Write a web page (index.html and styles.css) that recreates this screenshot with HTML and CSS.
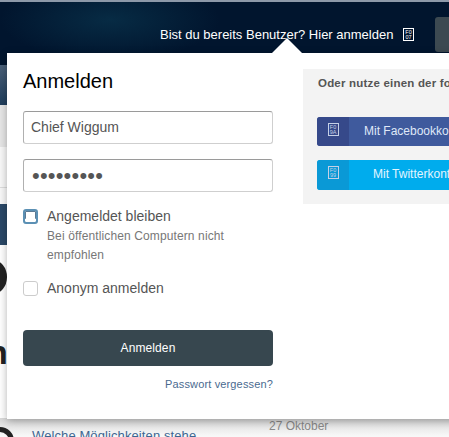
FILE: index.html
```html
<!DOCTYPE html>
<html lang="de">
<head>
  <meta charset="UTF-8">
  <title>Anmelden</title>
  <meta name="viewport" content="width=device-width, initial-scale=1.0">
  <link rel="stylesheet" href="styles.css">
</head>
<body>
  <div class="page">

    <div class="topbar">
      <span class="topbar-text">Bist du bereits Benutzer? Hier anmelden</span>
      <span class="glyph glyph-white">F0<br>07</span>
      <span class="topbar-btn"></span>
    </div>

    <div class="behind">
      <div class="strip strip-hero"></div>
      <div class="strip strip-grey"></div>
      <div class="strip strip-white"></div>
      <div class="strip strip-blue"></div>
      <div class="strip-avatar"></div>
      <div class="strip-letter">n</div>
      <div class="behind-row">
        <span class="behind-avatar"></span>
        <a class="behind-link">Welche Möglichkeiten stehe</a>
        <span class="behind-date">27 Oktober</span>
      </div>
    </div>

    <div class="popup">
      <div class="popup-caret"></div>

      <div class="login">
        <h2>Anmelden</h2>
        <div class="field">Chief Wiggum</div>
        <div class="field field-pass">•••••••••</div>

        <div class="check">
          <span class="box box-on"></span>
          <div>
            <div class="check-label">Angemeldet bleiben</div>
            <div class="check-hint">Bei öffentlichen Computern nicht empfohlen</div>
          </div>
        </div>

        <div class="check check-anon">
          <span class="box"></span>
          <div class="check-label">Anonym anmelden</div>
        </div>

        <button class="submit">Anmelden</button>
        <a class="forgot">Passwort vergessen?</a>
      </div>

      <div class="social">
        <h4>Oder nutze einen der folgenden Dienste</h4>
        <div class="social-btn fb">
          <span class="social-icon"><span class="glyph">F0<br>9A</span></span>
          <span class="social-text">Mit Facebookkonto anmelden</span>
        </div>
        <div class="social-btn tw">
          <span class="social-icon"><span class="glyph">F0<br>99</span></span>
          <span class="social-text">Mit Twitterkonto anmelden</span>
        </div>
      </div>
    </div>

  </div>
</body>
</html>
```

FILE: styles.css
```css
body {
  margin: 0;
  font-family: "Liberation Sans", Arial, sans-serif;
  background: #fff;
}

.page {
  position: relative;
  width: 449px;
  height: 437px;
  overflow: hidden;
  background: #fff;
}

.topbar {
  display: flex;
  box-sizing: border-box;
  height: 53px;
  padding-left: 160px;
  border-top: 2px solid #8d99a9;
  background:
    radial-gradient(ellipse 110px 40px at 110px 18px, rgba(14, 70, 95, .45), rgba(14, 70, 95, 0)),
    #01152e;
  color: #fff;
  font-size: 13px;
}

.topbar-text {
  flex: none;
  width: 243px;
  padding-top: 25px;
}

.glyph {
  flex: none;
  display: inline-block;
  box-sizing: border-box;
  width: 11px;
  height: 13px;
  padding-top: 1px;
  border: 1px solid #c5d0e6;
  font-size: 5.5px;
  line-height: 5px;
  text-align: center;
  color: #c5d0e6;
}

.glyph-white {
  margin-top: 26px;
  border-color: #fff;
  color: #fff;
}

.topbar-btn {
  flex: none;
  width: 60px;
  height: 35px;
  margin: 15px 0 0 21px;
  border-radius: 3px;
  background: #3c4951;
}

.behind {
  height: 384px;
  display: flex;
  flex-direction: column;
}

.strip {
  width: 10px;
}

.strip-hero {
  height: 52px;
  background: linear-gradient(to bottom, #01152e 12px, #4a6078 12px, #1f3d5c);
}

.strip-grey {
  height: 42px;
  background: #e6e6e6;
}

.strip-white {
  height: 57px;
  background: linear-gradient(to bottom, #f8f8f8 40px, #ddd 40px, #ddd 41px, #f8f8f8 41px);
}

.strip-blue {
  height: 41px;
  background: #2a4867;
}

.strip-avatar {
  width: 28px;
  height: 34px;
  margin: 15px 0 0 -21px;
  border-radius: 50%;
  background: #222;
}

.strip-letter {
  height: 40px;
  margin: 38px 0 0 -13px;
  font-size: 34px;
  font-weight: bold;
  line-height: 40px;
  color: #222;
}

.behind-row {
  position: relative;
  flex: 1;
  margin-top: 46px;
  background: linear-gradient(to bottom, #d8d8d8, #f8f8f8 18px);
}

.behind-avatar {
  position: absolute;
  left: -14px;
  top: 9px;
  box-sizing: border-box;
  width: 28px;
  height: 28px;
  border: 5px solid #222;
  border-radius: 50%;
}

.behind-link {
  position: absolute;
  left: 32px;
  top: 10px;
  font-size: 13px;
  letter-spacing: .1px;
  white-space: nowrap;
  color: #3d6691;
}

.behind-date {
  position: absolute;
  left: 269px;
  top: 1px;
  font-size: 12px;
  color: #888;
}

.popup {
  position: absolute;
  left: 7px;
  top: 53px;
  display: flex;
  width: 600px;
  height: 366px;
  background: #fff;
  box-shadow: 0 2px 8px rgba(0, 0, 0, .3);
}

.popup-caret {
  position: absolute;
  left: 265px;
  top: -15px;
  border-left: 15px solid transparent;
  border-right: 15px solid transparent;
  border-bottom: 15px solid #fff;
}

.login {
  flex: none;
  display: flex;
  flex-direction: column;
  width: 250px;
  margin-left: 16px;
}

.login h2 {
  margin: 16px 0 18px;
  font-size: 20px;
  font-weight: normal;
  line-height: 24px;
  color: #000;
}

.field {
  box-sizing: border-box;
  height: 33px;
  margin-bottom: 15px;
  padding-left: 7px;
  border: 1px solid #cfcfcf;
  border-top-color: #9a9a9a;
  border-left-color: #b0b0b0;
  border-radius: 3px;
  font-size: 14px;
  line-height: 30px;
  color: #555;
}

.field-pass {
  padding-left: 8px;
  font-size: 22px;
  line-height: 32px;
  letter-spacing: .2px;
  overflow: hidden;
}

.check {
  display: flex;
  gap: 9px;
  margin-top: 1px;
}

.check-anon {
  margin-top: 15px;
}

.box {
  flex: none;
  box-sizing: border-box;
  width: 15px;
  height: 15px;
  margin-top: 1px;
  border: 1px solid #ccc;
  border-radius: 3px;
}

.box-on {
  border: 2px solid #5b90b4;
  box-shadow: inset 0 -3px 0 #fff, inset 0 0 0 1px #5b7a94;
}

.check-label {
  font-size: 14px;
  line-height: 17px;
  color: #555;
}

.check-hint {
  margin-top: 2px;
  font-size: 12px;
  line-height: 19px;
  letter-spacing: .12px;
  color: #777;
}

.submit {
  flex: none;
  height: 36px;
  margin-top: 33px;
  border: none;
  border-radius: 4px;
  background: #37474f;
  font-family: inherit;
  font-size: 12px;
  letter-spacing: .1px;
  color: #fff;
}

.forgot {
  margin-top: 11px;
  font-size: 11px;
  line-height: 14px;
  letter-spacing: .15px;
  text-align: right;
  color: #4a6a8f;
}

.social {
  flex: none;
  box-sizing: border-box;
  width: 300px;
  height: 135px;
  margin: 16px 0 0 30px;
  padding: 7px 14px 0 14px;
  background: #f3f3f3;
}

.social h4 {
  margin: 0 0 27px 1px;
  font-size: 11.5px;
  line-height: 14px;
  letter-spacing: .2px;
  white-space: nowrap;
  color: #555;
}

.social-btn {
  display: flex;
  height: 29px;
  margin-bottom: 14px;
  border-radius: 3px;
  font-size: 12px;
  line-height: 29px;
  color: #dfe8f8;
  overflow: hidden;
}

.social-icon {
  flex: none;
  display: flex;
  justify-content: center;
  align-items: flex-start;
  width: 32px;
  padding-top: 6px;
}

.social-text {
  padding-left: 15px;
  white-space: nowrap;
}

.fb {
  background: #3f5a9d;
}

.fb .social-icon {
  background: #36498a;
}

.tw {
  height: 30px;
  background: #00aced;
}

.tw .social-icon {
  background: #0a99d6;
}

.tw .social-text {
  padding-left: 24px;
  color: #e2f5ff;
}
```
